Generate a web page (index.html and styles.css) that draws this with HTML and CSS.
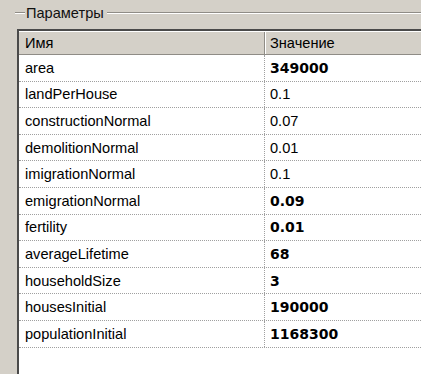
FILE: index.html
```html
<!DOCTYPE html>
<html lang="ru">
<head>
    <meta charset="UTF-8">
    <title>Параметры</title>
    <link rel="stylesheet" href="styles.css">
</head>
<body>
    <div class="group">
        <div class="group-title">
            <span class="rule rule-start"></span>
            <span class="caption">Параметры</span>
            <span class="rule"></span>
        </div>
        <div class="grid">
            <div class="grid-head">
                <div class="cell name">Имя</div>
                <div class="cell value">Значение</div>
            </div>
            <div class="row"><div class="cell name">area</div><div class="cell value changed">349000</div></div>
            <div class="row"><div class="cell name">landPerHouse</div><div class="cell value">0.1</div></div>
            <div class="row"><div class="cell name">constructionNormal</div><div class="cell value">0.07</div></div>
            <div class="row"><div class="cell name">demolitionNormal</div><div class="cell value">0.01</div></div>
            <div class="row"><div class="cell name">imigrationNormal</div><div class="cell value">0.1</div></div>
            <div class="row"><div class="cell name">emigrationNormal</div><div class="cell value changed">0.09</div></div>
            <div class="row"><div class="cell name">fertility</div><div class="cell value changed">0.01</div></div>
            <div class="row"><div class="cell name">averageLifetime</div><div class="cell value changed">68</div></div>
            <div class="row"><div class="cell name">householdSize</div><div class="cell value changed">3</div></div>
            <div class="row"><div class="cell name">housesInitial</div><div class="cell value changed">190000</div></div>
            <div class="row"><div class="cell name">populationInitial</div><div class="cell value changed">1168300</div></div>
        </div>
    </div>
</body>
</html>
```

FILE: styles.css
```css
body {
    margin: 0;
    background: #d4d0c8;
    font-family: "Liberation Sans", Arial, sans-serif;
    font-size: 14.6px;
    color: #000;
    height: 374px;
    display: flex;
    flex-direction: column;
    overflow: hidden;
}
.group {
    flex: 1;
    display: flex;
    flex-direction: column;
    padding: 3px 0 0 15px;
    min-height: 0;
}
.group-title {
    display: flex;
    align-items: center;
    height: 20px;
}
.rule {
    flex: 1;
    border-top: 1px solid #8f8c86;
    border-bottom: 1px solid #ffffff;
}
.rule-start {
    flex: none;
    width: 10px;
}
.caption {
    padding: 0 3px 0 1px;
    color: #111;
}
.grid {
    flex: 1;
    min-height: 0;
    margin: 6px 0 0 2px;
    background: #fff;
    border-top: 2px solid #4a4a4a;
    border-left: 2px solid #4a4a4a;
    overflow: hidden;
}
.grid-head {
    display: flex;
    height: 24px;
    background: #d4d0c8;
    border-top: 1px solid #fff;
    border-bottom: 1px solid #8f8c86;
    box-sizing: border-box;
}
.grid-head .value {
    border-left: 1px solid #8f8c86;
    box-shadow: inset 1px 0 0 #fff;
}
.row {
    display: flex;
    height: 26.6px;
    box-sizing: border-box;
    border-bottom: 1px dotted #a0a0a0;
}
.cell {
    display: flex;
    align-items: center;
    white-space: nowrap;
}
.name {
    width: 239px;
    padding-left: 6px;
}
.value {
    flex: 1;
    padding-left: 5px;
}
.row .value {
    border-left: 1px dotted #a0a0a0;
}
.changed {
    font-family: "DejaVu Sans", Verdana, sans-serif;
    font-weight: bold;
    font-size: 14px;
}
```
